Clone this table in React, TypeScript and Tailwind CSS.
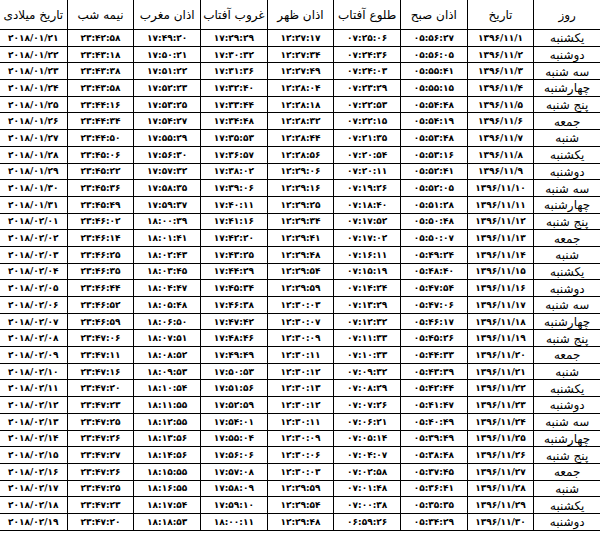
import React from 'react';

const fa = (s: string) => s.replace(/\d/g, (d) => '۰۱۲۳۴۵۶۷۸۹'[Number(d)]);

const days = ['یکشنبه', 'دوشنبه', 'سه شنبه', 'چهارشنبه', 'پنج شنبه', 'جمعه', 'شنبه'];

const fajr = ['05:56:27', '05:56:05', '05:55:41', '05:55:15', '05:54:48', '05:54:19', '05:53:48', '05:53:16', '05:52:41', '05:52:05', '05:51:28', '05:50:48', '05:50:07', '05:49:24', '05:48:40', '05:47:54', '05:47:06', '05:46:17', '05:45:26', '05:44:33', '05:43:39', '05:42:44', '05:41:47', '05:40:49', '05:39:49', '05:38:48', '05:37:45', '05:36:41', '05:35:35', '05:34:29'];
const sunrise = ['07:25:06', '07:24:36', '07:24:03', '07:23:29', '07:22:53', '07:22:15', '07:21:35', '07:20:54', '07:20:11', '07:19:26', '07:18:40', '07:17:52', '07:17:02', '07:16:11', '07:15:19', '07:14:24', '07:13:29', '07:12:32', '07:11:33', '07:10:33', '07:09:32', '07:08:29', '07:07:26', '07:06:21', '07:05:14', '07:04:07', '07:02:58', '07:01:48', '07:00:38', '06:59:26'];
const dhuhr = ['12:27:17', '12:27:34', '12:27:49', '12:28:04', '12:28:18', '12:28:32', '12:28:44', '12:28:56', '12:29:06', '12:29:16', '12:29:25', '12:29:34', '12:29:41', '12:29:48', '12:29:54', '12:29:59', '12:30:03', '12:30:07', '12:30:09', '12:30:11', '12:30:12', '12:30:13', '12:30:12', '12:30:11', '12:30:09', '12:30:06', '12:30:03', '12:29:59', '12:29:54', '12:29:48'];
const sunset = ['17:29:29', '17:30:32', '17:31:36', '17:32:40', '17:33:44', '17:34:48', '17:35:53', '17:36:57', '17:38:02', '17:39:06', '17:40:11', '17:41:16', '17:42:20', '17:43:25', '17:44:29', '17:45:34', '17:46:38', '17:47:42', '17:48:46', '17:49:49', '17:50:53', '17:51:56', '17:52:59', '17:54:01', '17:55:04', '17:56:06', '17:57:08', '17:58:09', '17:59:10', '18:00:11'];
const maghrib = ['17:49:20', '17:50:21', '17:51:22', '17:52:23', '17:53:25', '17:54:27', '17:55:29', '17:56:30', '17:57:32', '17:58:35', '17:59:37', '18:00:39', '18:01:41', '18:02:43', '18:03:45', '18:04:47', '18:05:48', '18:06:50', '18:07:51', '18:08:52', '18:09:53', '18:10:54', '18:11:55', '18:12:55', '18:13:56', '18:14:56', '18:15:55', '18:16:55', '18:17:54', '18:18:53'];
const midnight = ['23:42:58', '23:43:18', '23:43:38', '23:43:58', '23:44:16', '23:44:34', '23:44:50', '23:45:06', '23:45:22', '23:45:36', '23:45:49', '23:46:02', '23:46:14', '23:46:25', '23:46:35', '23:46:44', '23:46:52', '23:46:59', '23:47:06', '23:47:11', '23:47:16', '23:47:20', '23:47:23', '23:47:25', '23:47:26', '23:47:27', '23:47:26', '23:47:25', '23:47:23', '23:47:20'];

const gregorian = (i: number) => {
  const d = i < 11 ? { m: '01', d: 21 + i } : { m: '02', d: i - 10 };
  return `2018/${d.m}/${String(d.d).padStart(2, '0')}`;
};

const headers = ['روز', 'تاریخ', 'اذان صبح', 'طلوع آفتاب', 'اذان ظهر', 'غروب آفتاب', 'اذان مغرب', 'نیمه شب', 'تاریخ میلادی'];

const rows = Array.from({ length: 30 }, (_, i) => [
  days[i % 7],
  `1396/11/${i + 1}`,
  fajr[i],
  sunrise[i],
  dhuhr[i],
  sunset[i],
  maghrib[i],
  midnight[i],
  gregorian(i),
]);

export default function App() {
  return (
    <div className="w-[602px] h-[534px] bg-white overflow-hidden font-['DejaVu_Sans',sans-serif] text-black">
      <div dir="rtl" className="w-[600px] grid grid-cols-9 grid-rows-[30px_repeat(30,16.7px)]">
        {headers.map((h, c) => (
          <div
            key={h + c}
            className={
              c === 8
                ? 'flex items-center justify-center border-b border-black text-[12px] leading-none'
                : 'flex items-center justify-center border-b border-l border-black text-[12px] leading-none'
            }
          >
            {h}
          </div>
        ))}
        {rows.map((r, i) =>
          r.map((v, c) => (
            <div
              key={`${i}-${c}`}
              className={
                c === 0
                  ? 'flex items-center justify-center border-b border-l border-black text-[12px] leading-none pt-[1px]'
                  : c === 8
                    ? 'flex items-center justify-center border-b border-black text-[9px] font-bold leading-none pt-[1px]'
                    : 'flex items-center justify-center border-b border-l border-black text-[9px] font-bold leading-none pt-[1px]'
              }
            >
              {c === 0 ? v : <span dir="ltr">{fa(v)}</span>}
            </div>
          ))
        )}
      </div>
    </div>
  );
}
